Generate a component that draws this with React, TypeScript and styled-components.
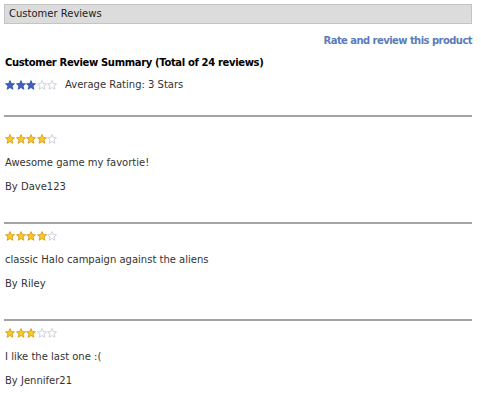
import styled, { createGlobalStyle } from 'styled-components';

const Global = createGlobalStyle`
  body {
    margin: 0;
    background: #fff;
    font-family: 'DejaVu Sans', Verdana, sans-serif;
    color: #333;
  }
`;

type Review = { stars: number; text: string; author: string };

const reviews: Review[] = [
  { stars: 4, text: 'Awesome game my favortie!', author: 'Dave123' },
  { stars: 4, text: 'classic Halo campaign against the aliens', author: 'Riley' },
  { stars: 3, text: 'I like the last one :(', author: 'Jennifer21' },
];

function Star({ filled, tone }: { filled: boolean; tone: 'blue' | 'gold' }) {
  const fill = filled ? (tone === 'blue' ? '#3f62c0' : '#f7cc2a') : '#fff';
  const stroke = filled ? (tone === 'blue' ? '#2d4ea8' : '#d8920f') : '#c4c8d4';
  return (
    <svg width='10' height='10' viewBox='0 0 10 10'>
      <polygon
        points='5,0.6 6.3,3.6 9.5,3.8 7,5.9 7.9,9.3 5,7.5 2.1,9.3 3,5.9 0.5,3.8 3.7,3.6'
        fill={fill}
        stroke={stroke}
        strokeWidth='0.8'
        strokeLinejoin='round'
      />
    </svg>
  );
}

function Stars({ count, tone }: { count: number; tone: 'blue' | 'gold' }) {
  return (
    <StarRow>
      {[0, 1, 2, 3, 4].map((i) => (
        <Star key={i} filled={i < count} tone={tone} />
      ))}
    </StarRow>
  );
}

export default function App() {
  return (
    <>
      <Global />
      <Wrap>
        <TitleBar>Customer Reviews</TitleBar>
        <RateLink href='#'>Rate and review this product</RateLink>
        <Summary>Customer Review Summary (Total of 24 reviews)</Summary>
        <Average>
          <Stars count={3} tone='blue' />
          <span>Average Rating: 3 Stars</span>
        </Average>
        {reviews.map((r) => (
          <ReviewItem key={r.author}>
            <Stars count={r.stars} tone='gold' />
            <ReviewText>{r.text}</ReviewText>
            <ReviewText>By {r.author}</ReviewText>
          </ReviewItem>
        ))}
      </Wrap>
    </>
  );
}

const Wrap = styled.div`
  width: 468px;
  padding: 4px 0 0 4px;
  font-size: 10px;
`;

const TitleBar = styled.div`
  height: 18px;
  line-height: 18px;
  padding-left: 4px;
  background: #dcdcdc;
  border: 1px solid #c4c4c4;
  color: #222;
  font-size: 10px;
`;

const RateLink = styled.a`
  display: block;
  text-align: right;
  margin-top: 10px;
  height: 14px;
  line-height: 14px;
  font-weight: bold;
  letter-spacing: -0.55px;
  color: #5b7cba;
  text-decoration: none;
`;

const Summary = styled.div`
  margin-top: 8px;
  padding-left: 1px;
  font-weight: bold;
  letter-spacing: -0.35px;
  color: #000;
  line-height: 14px;
`;

const Average = styled.div`
  display: flex;
  align-items: center;
  gap: 8px;
  margin-top: 8px;
  padding-left: 1px;
  line-height: 14px;
  color: #333;
`;

const StarRow = styled.span`
  display: inline-flex;
  gap: 0.5px;
  svg {
    display: block;
  }
`;

const ReviewItem = styled.div`
  margin-top: 23px;
  border-top: 2px solid #a3a3a3;
  padding: 17px 0 0 1px;
  & + & {
    margin-top: 28px;
    padding-top: 7px;
  }
`;

const ReviewText = styled.div`
  margin-top: 10px;
  line-height: 14px;
`;
